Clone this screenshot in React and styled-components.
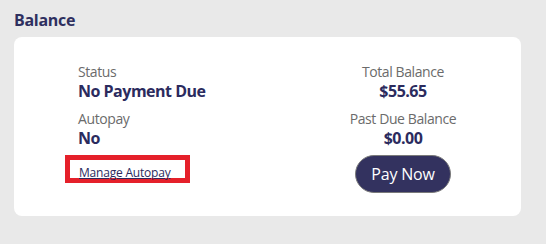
import React from "react";
import styled, { createGlobalStyle } from "styled-components";

const Global = createGlobalStyle`
  html, body { margin: 0; padding: 0; background: #e9e9e9; }
  body { font-family: "Open Sans", "Noto Sans", sans-serif; }
`;

const Page = styled.div`
  padding: 10px 25px 0 14px;
`;

const Title = styled.h2`
  margin: 0 0 6px;
  font-size: 16px;
  line-height: 21px;
  font-weight: 700;
  color: #2e2f5f;
  letter-spacing: -0.3px;
`;

const Card = styled.section`
  background: #fff;
  border-radius: 8px;
  height: 179px;
  box-sizing: border-box;
  padding: 25px 0 0 64px;
  display: grid;
  grid-template-columns: 1fr 236px;
`;

const Column = styled.div`
  display: flex;
  flex-direction: column;
  align-items: ${(p) => (p.$center ? "center" : "flex-start")};
`;

const Label = styled.div`
  font-size: 14px;
  line-height: 19px;
  color: #6b6b6b;
  letter-spacing: -0.4px;
  margin-top: ${(p) => (p.$first ? 0 : "7px")};
`;

const Value = styled.div`
  font-size: 16px;
  line-height: 21px;
  font-weight: 700;
  color: #2b2b5e;
  letter-spacing: -0.5px;
`;

const Highlight = styled.span`
  display: inline-block;
  margin: 6px 0 0 -13px;
  border: 5px solid #e5202a;
  padding: 0 14px 0 9px;
  height: 18px;
`;

const Link = styled.a`
  font-size: 12px;
  line-height: 18px;
  color: #2b2b5e;
  letter-spacing: -0.2px;
  text-decoration: underline;
  cursor: pointer;
`;

const PayButton = styled.button`
  margin-top: 6px;
  width: 96px;
  height: 38px;
  border-radius: 19px;
  border: 1px solid #7a7a7a;
  background: #33325f;
  color: #fff;
  font-family: inherit;
  font-size: 16px;
  letter-spacing: -0.2px;
  cursor: pointer;
`;

export default function App() {
  return (
    <Page>
      <Global />
      <Title>Balance</Title>
      <Card>
        <Column>
          <Label $first>Status</Label>
          <Value>No Payment Due</Value>
          <Label>Autopay</Label>
          <Value>No</Value>
          <Highlight>
            <Link>Manage Autopay</Link>
          </Highlight>
        </Column>
        <Column $center>
          <Label $first>Total Balance</Label>
          <Value>$55.65</Value>
          <Label>Past Due Balance</Label>
          <Value>$0.00</Value>
          <PayButton>Pay Now</PayButton>
        </Column>
      </Card>
    </Page>
  );
}
